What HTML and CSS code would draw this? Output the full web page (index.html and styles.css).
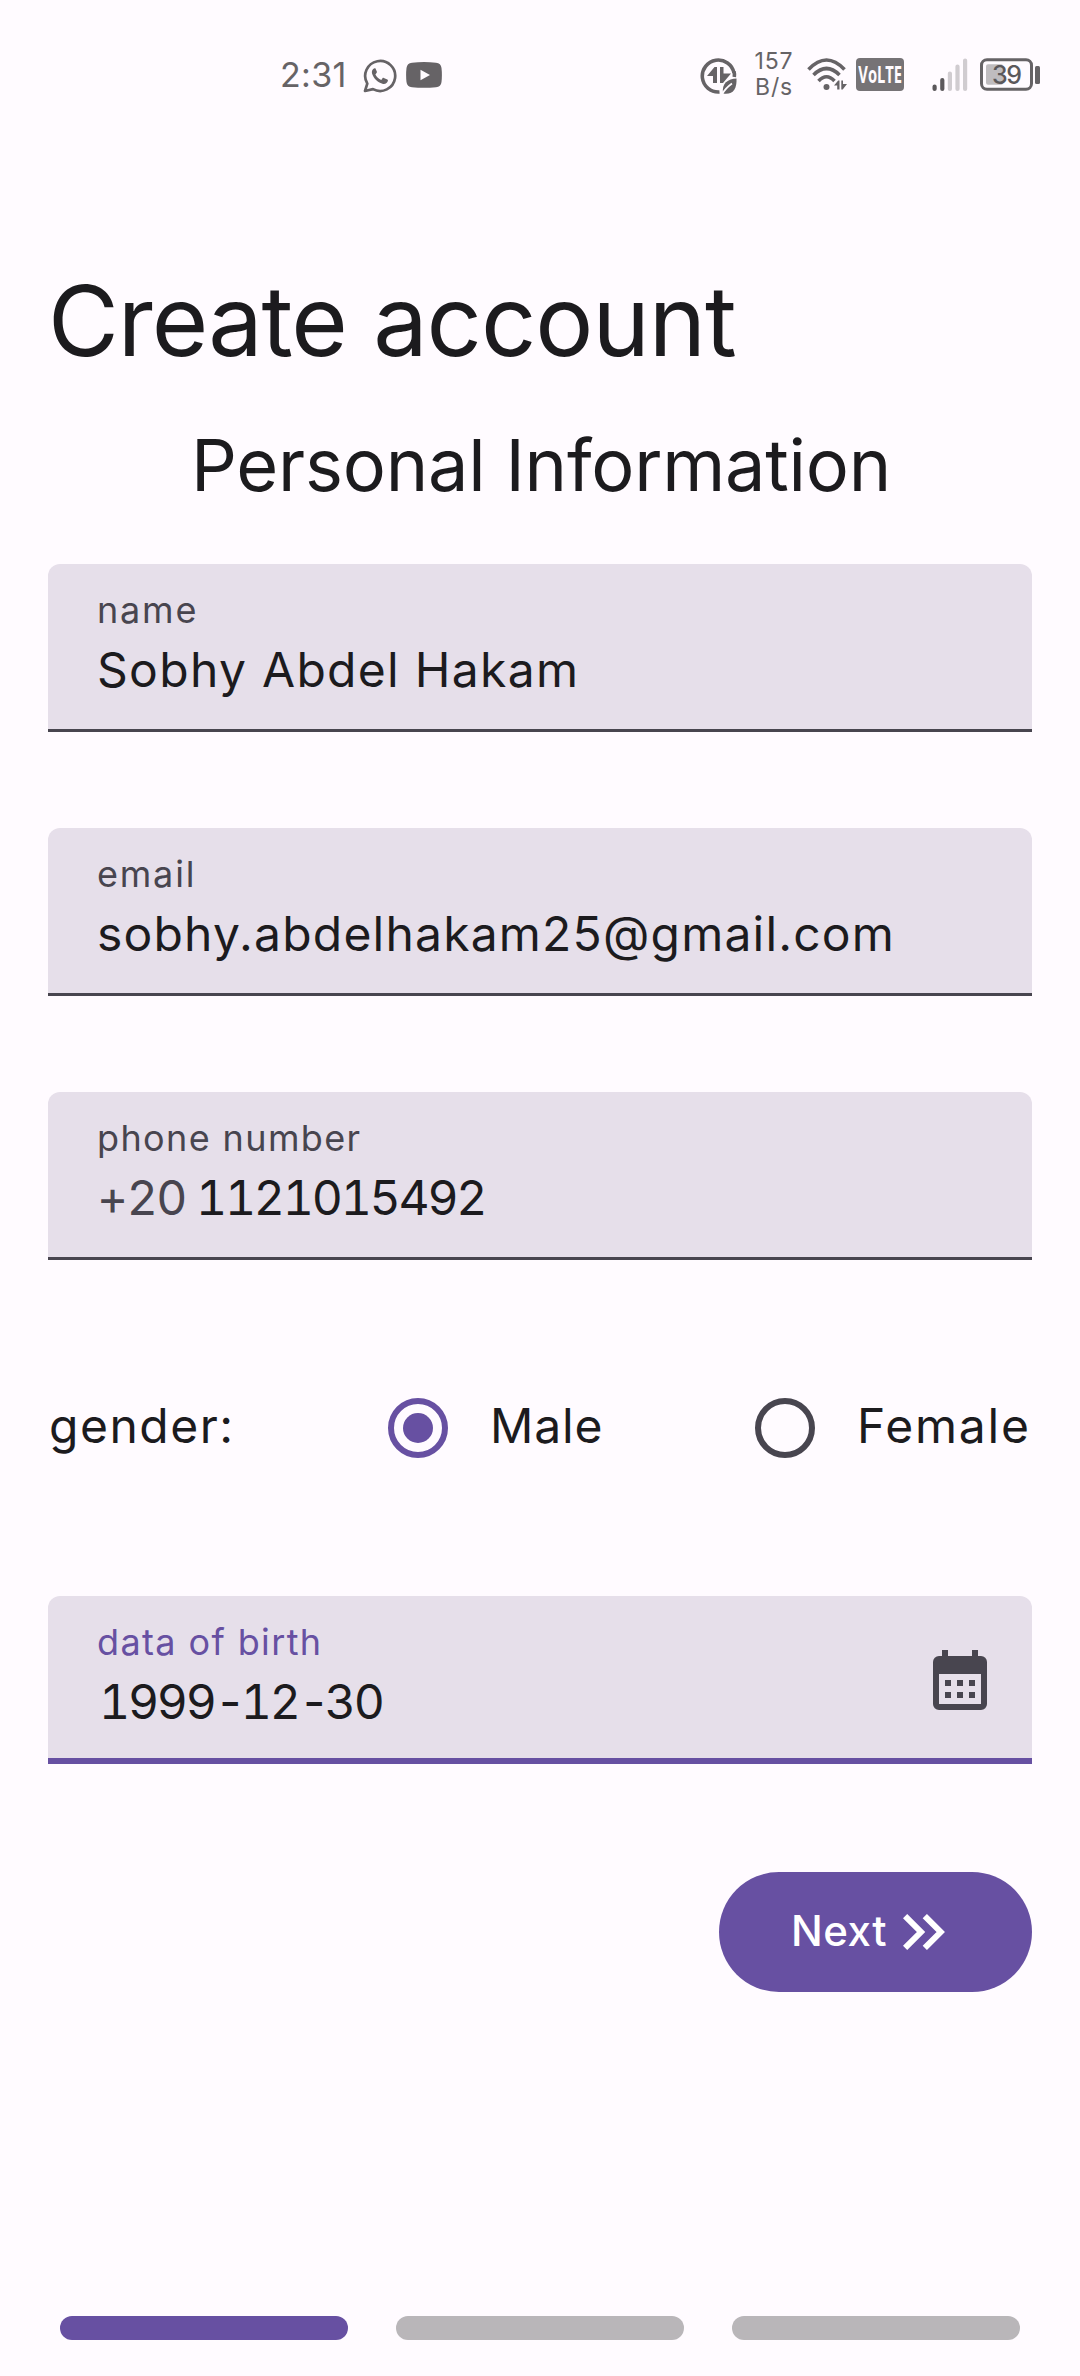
FILE: index.html
```html
<!DOCTYPE html>
<html lang="en">
<head>
<meta charset="utf-8">
<title>Create account</title>
<link rel="stylesheet" href="styles.css">
</head>
<body>
<div class="screen">
  <header class="status">
    <div class="status-left">
      <span class="clock">2:31</span>
      <svg class="whatsapp" width="34" height="34" viewBox="0 0 34 34" fill="none">
        <path d="M2 32L4.300 24.600A15 15 0 1 1 10 30.100Z" stroke="#666366" stroke-width="2.700" stroke-linejoin="round"/>
        <path d="M11.500 9.300c-2 .6-3.200 3-2.400 5.500 1.800 5 5.400 8.500 10.300 10 2.700.7 5-.5 5.500-3 .1-.7 0-.9-.6-1.200l-3.500-1.600c-.6-.3-.9-.2-1.300.3l-1.200 1.600c-2.700-1.100-4.600-2.900-5.900-5.400l1.300-1.700c.3-.4.3-.8.1-1.200l-1.300-3c-.2-.4-.5-.4-1-.3z" fill="#666366"/>
      </svg>
      <svg class="youtube" width="36" height="26" viewBox="0 0 36 26">
        <path d="M6 .7Q18-.5 30 .7Q35 1.200 35.500 6Q36.300 13 35.500 20Q35 24.800 30 25.300Q18 26.300 6 25.300Q1 24.800.5 20Q-.3 13 .5 6Q1 1.200 6 .7Z" fill="#666366"/>
        <path d="M14.500 7.800v10.400l9.500-5.200z" fill="#fffbff"/>
      </svg>
    </div>
    <div class="status-right">
      <svg class="saver" width="37" height="37" viewBox="0 0 37 37">
        <path d="M34 15A16 16 0 1 0 19.500 34" fill="none" stroke="#666366" stroke-width="3.600"/>
        <path d="M34 13.500Q34.800 16 34.300 19" fill="none" stroke="#666366" stroke-width="3.600"/>
        <path d="M7 18L14.500 9H17V25H13V18ZM20 9H23.500V15.500H31L23 25H20Z" fill="#666366"/>
        <path d="M36.500 20.500C28 21 21.500 25 23 35.500C33 37 37 31 36.500 20.500Z" fill="#666366"/>
        <path d="M22 36.500Q25 30.500 32 25.500" fill="none" stroke="#fffbff" stroke-width="1.800"/>
      </svg>
      <div class="speed"><span>157</span><span>B/s</span></div>
      <svg class="wifi" width="40" height="34" viewBox="0 0 40 34" fill="none" stroke="#666366" stroke-width="3.600">
        <path d="M1.500 11.500Q19.500-7.500 37.500 11.500"/>
        <path d="M6.500 17Q19.500 4 32.500 17"/>
        <path d="M11.500 23Q19.500 14.500 27.500 23"/>
        <circle cx="19.500" cy="29" r="3" fill="#666366" stroke="none"/>
        <path d="M27 27.500L31.200 22.500H32.500V31.500H30.200V27.500ZM34.300 22.500H36V26H40L35.700 31.500H34.300Z" fill="#666366" stroke="none"/>
      </svg>
      <div class="volte"><span class="volte-text">VoLTE</span></div>
      <svg class="signal" width="36" height="34" viewBox="0 0 36 34" stroke-linecap="round" stroke-width="4.200">
        <path d="M2.600 28.500V31M10.300 22V31" stroke="#5b585b"/>
        <path d="M17.900 15.500V31M25.500 8.500V31M33.100 2.500V31" stroke="#d0ccd0"/>
      </svg>
      <svg class="battery" width="61" height="34" viewBox="0 0 61 34">
        <rect x="1.500" y="1.800" width="50" height="29.500" rx="5.500" fill="none" stroke="#666366" stroke-width="3"/>
        <rect x="6" y="6.300" width="17" height="20.500" rx="2" fill="#bfbcbf"/>
        <rect x="55" y="8" width="5" height="18" rx="1.500" fill="#666366"/>
        <text x="12" y="25.600" textLength="30" class="battery-text">39</text>
      </svg>
    </div>
  </header>

  <main class="form">
    <h1 class="title">Create account</h1>
    <h2 class="subtitle">Personal Information</h2>

    <div class="fields">
      <div class="field">
        <div class="label wide">name</div>
        <div class="value name">Sobhy Abdel Hakam</div>
      </div>
      <div class="field">
        <div class="label wide">email</div>
        <div class="value">sobhy.abdelhakam25@gmail.com</div>
      </div>
      <div class="field">
        <div class="label">phone number</div>
        <div class="value phone"><span class="prefix">+20</span><span>1121015492</span></div>
      </div>
    </div>

    <div class="gender">
      <span class="gender-label">gender:</span>
      <div class="option male">
        <span class="radio checked"></span>
        <span class="option-label">Male</span>
      </div>
      <div class="option female">
        <span class="radio"></span>
        <span class="option-label">Female</span>
      </div>
    </div>

    <div class="field focused">
      <div>
        <div class="label">data of birth</div>
        <div class="value date">1999<span class="dash">-</span>12<span class="dash">-</span>30</div>
      </div>
      <svg class="calendar" width="54" height="60" viewBox="0 0 54 60">
        <path fill="#48454f" fill-rule="evenodd" d="M9 0h6v6h24V0h6v6h3a6 6 0 0 1 6 6v42a6 6 0 0 1-6 6H6a6 6 0 0 1-6-6V12a6 6 0 0 1 6-6h3zM6 24v30h42V24z"/>
        <path fill="#48454f" d="M12 30h6v6h-6zM24 30h6v6h-6zM36 30h6v6h-6zM12 42h6v6h-6zM24 42h6v6h-6zM36 42h6v6h-6z"/>
      </svg>
    </div>

    <button class="next">
      <span class="next-text">Next</span>
      <svg width="42" height="36" viewBox="0 0 42 36" fill="none" stroke="#fff" stroke-width="6">
        <path d="M2.100 2.100L18 18L2.100 33.900M21.800 2.100L37.700 18L21.800 33.900"/>
      </svg>
    </button>
  </main>

  <footer class="steps">
    <span class="step active"></span>
    <span class="step"></span>
    <span class="step"></span>
  </footer>
</div>
</body>
</html>
```
FILE: styles.css
```css
* {
  box-sizing: border-box;
}

body {
  margin: 0;
  background: #fffbff;
  color: #1c1b1e;
  font-family: Inter, "Noto Sans", sans-serif;
}

.screen {
  display: flex;
  flex-direction: column;
  width: 1080px;
  height: 2376px;
  padding: 0 48px;
}

/* Status bar */
.status {
  display: flex;
  justify-content: space-between;
  height: 100px;
  margin: 0 -9px 0 0;
  padding: 50px 0 0 232px;
  color: #666366;
}

.status-left,
.status-right {
  display: flex;
  align-items: flex-start;
  flex: none;
}

.status-left { width: 164px; }

.clock {
  width: 83px;
  font-size: 34px;
  line-height: 50px;
  letter-spacing: 0.3px;
}

.whatsapp { margin-top: 9px; }
.youtube { margin: 12px 0 0 9px; }
.saver { margin-top: 8px; }

.speed {
  display: flex;
  flex-direction: column;
  width: 44px;
  margin: -2px 11px 0 15px;
  font-size: 23px;
  line-height: 26px;
  letter-spacing: 0.8px;
  text-align: center;
}

.wifi { margin-top: 8px; }

.volte {
  display: flex;
  justify-content: center;
  width: 48px;
  height: 33px;
  margin: 8px 0 0 9px;
  border-radius: 4px;
  background: #767376;
}

.volte-text {
  flex: none;
  color: #fffbff;
  font: 700 23px/33px "Open Sans", sans-serif;
  transform: scaleX(0.64);
}

.signal { margin: 8px 0 0 28px; }
.battery { margin: 8px 0 0 12px; }

.battery-text {
  fill: #5b585b;
  font: 500 25px Inter, sans-serif;
}

/* Form */
.form {
  display: flex;
  flex-direction: column;
}

.title {
  margin: 161px 0 0;
  font-size: 97px;
  font-weight: 400;
  line-height: 120px;
  letter-spacing: -1.03px;
}

.subtitle {
  margin: 39px 0 0;
  padding-left: 2px;
  font-size: 72px;
  font-weight: 400;
  line-height: 90px;
  letter-spacing: -0.22px;
  text-align: center;
}

.fields {
  display: flex;
  flex-direction: column;
  gap: 96px;
  margin-top: 54px;
}

.field {
  height: 168px;
  padding: 22px 45px 0 49px;
  border-bottom: 3px solid #48454f;
  border-radius: 12px 12px 0 0;
  background: #e6dfea;
}

.label {
  color: #48454f;
  font-size: 36px;
  line-height: 48px;
  letter-spacing: 1.38px;
}

.label.wide { letter-spacing: 1.8px; }

.value {
  margin-top: 6px;
  font-size: 48px;
  line-height: 60px;
  letter-spacing: 1.2px;
}

.value.name { letter-spacing: 1.31px; }

.value.phone,
.value.date {
  font-variant-numeric: tabular-nums;
  letter-spacing: -2.2px;
}

.value.date { padding-left: 2px; }
.dash { letter-spacing: -5px; }

.prefix {
  display: inline-block;
  width: 99px;
  color: #48454f;
  letter-spacing: -1.5px;
}

/* Gender row */
.gender {
  display: flex;
  align-items: center;
  height: 60px;
  margin: 138px 0;
  font-size: 48px;
}

.gender-label {
  width: 340px;
  padding: 0 0 5px 1px;
  line-height: 60px;
  letter-spacing: 1.5px;
}

.option {
  display: flex;
  align-items: center;
  gap: 42px;
}

.option-label {
  padding-bottom: 5px;
  line-height: 60px;
}

.male { width: 367px; letter-spacing: 0.83px; }
.female { letter-spacing: 1.8px; }

.radio {
  display: flex;
  align-items: center;
  justify-content: center;
  width: 60px;
  height: 60px;
  border: 6px solid #48454f;
  border-radius: 50%;
}

.radio.checked { border-color: #6750a2; }

.radio.checked::before {
  content: "";
  width: 30px;
  height: 30px;
  border-radius: 50%;
  background: #6750a2;
}

/* Focused date field */
.field.focused {
  display: flex;
  justify-content: space-between;
  border-bottom: 6px solid #6750a2;
}

.focused .label { color: #6750a2; }
.calendar { margin-top: 32px; }

/* Next button */
.next {
  display: flex;
  align-items: center;
  align-self: flex-end;
  width: 313px;
  height: 120px;
  margin-top: 108px;
  padding: 0 0 0 72px;
  border: 0;
  border-radius: 60px;
  background: #6750a2;
  color: #fff;
  font: 500 42px Inter, sans-serif;
}

.next-text {
  width: 112px;
  padding-bottom: 4px;
  text-align: left;
  letter-spacing: 0.5px;
}

/* Step indicator */
.steps {
  display: flex;
  gap: 48px;
  margin: auto 12px 36px;
}

.step {
  flex: 1;
  height: 24px;
  border-radius: 12px;
  background: #b9b6b9;
}

.step.active { background: #6750a2; }
```
